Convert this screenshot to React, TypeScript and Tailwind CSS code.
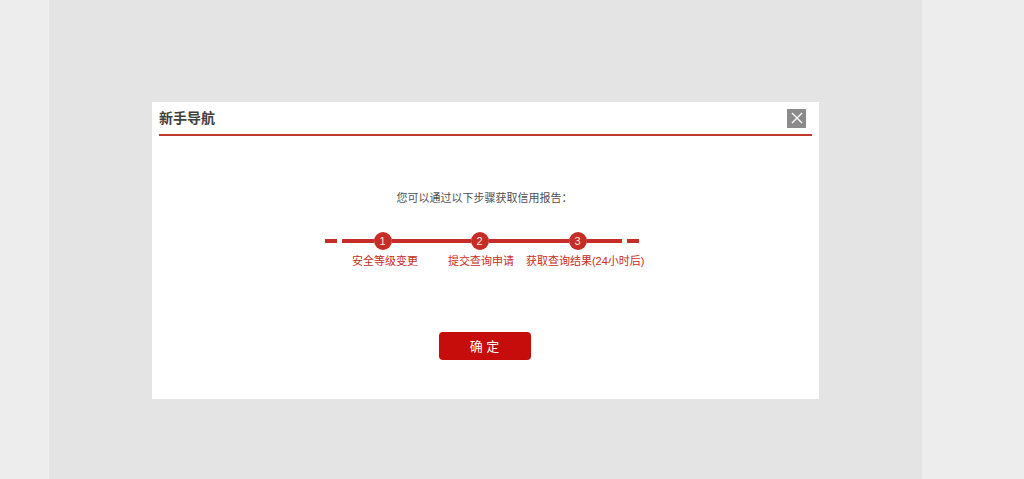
import React from 'react';

function Dash() {
  return <span className="h-1 w-3 bg-[#c52d26]" />;
}

function Bar({ className }: { className: string }) {
  return <span className={`h-1 bg-[#c52d26] ${className}`} />;
}

function StepDot({ value }: { value: number }) {
  return (
    <span className="flex size-[18px] shrink-0 items-center justify-center rounded-full bg-[#c52d26] text-[11px] leading-none text-[#fbe3e0]">
      {value}
    </span>
  );
}

function Steps() {
  return (
    <div className="w-80 text-[#c52d26]">
      <div className="flex items-center">
        <Dash />
        <Bar className="ml-[5px] w-8" />
        <StepDot value={1} />
        <Bar className="w-[79px]" />
        <StepDot value={2} />
        <Bar className="w-20" />
        <StepDot value={3} />
        <Bar className="mr-[5px] w-[35px]" />
        <Dash />
      </div>
      <ol className="mt-[3px] flex justify-end whitespace-nowrap text-[11px] leading-4">
        <li className="mr-[30px]">安全等级变更</li>
        <li className="mr-3">提交查询申请</li>
        <li>获取查询结果(24小时后)</li>
      </ol>
    </div>
  );
}

export default function App() {
  return (
    <div className="min-h-screen bg-[#ededed] pl-[49px] pr-[102px] font-['Liberation_Sans','Noto_Sans_CJK_SC',sans-serif]">
      <main className="flex min-h-screen justify-center bg-[#e4e4e4] pt-[102px]">
        <section
          role="dialog"
          aria-labelledby="guide-title"
          className="flex w-full max-w-[667px] flex-col self-start bg-white px-[7px] pb-[39px]"
        >
          <header className="flex h-[34px] items-center justify-between border-b-2 border-[#c23a2d] pr-[6px]">
            <h1 id="guide-title" className="text-sm font-bold text-[#404040]">
              新手导航
            </h1>
            <button
              type="button"
              aria-label="关闭"
              className="flex size-[19px] items-center justify-center bg-[#8b8b8b] text-white"
            >
              <svg viewBox="0 0 12 12" className="size-3" fill="none" stroke="currentColor" strokeWidth="1.4">
                <path d="M1 1 11 11M11 1 1 11" />
              </svg>
            </button>
          </header>
          <div className="flex flex-col items-center pr-[2px] pt-[54px]">
            <p className="text-[11px] leading-4 text-[#505050]">您可以通过以下步骤获取信用报告：</p>
            <div className="mt-[26px]">
              <Steps />
            </div>
            <button
              type="button"
              className="mt-[63px] h-7 w-[92px] rounded bg-[#c70c0c] text-[13px] leading-none text-white"
            >
              确 定
            </button>
          </div>
        </section>
      </main>
    </div>
  );
}
